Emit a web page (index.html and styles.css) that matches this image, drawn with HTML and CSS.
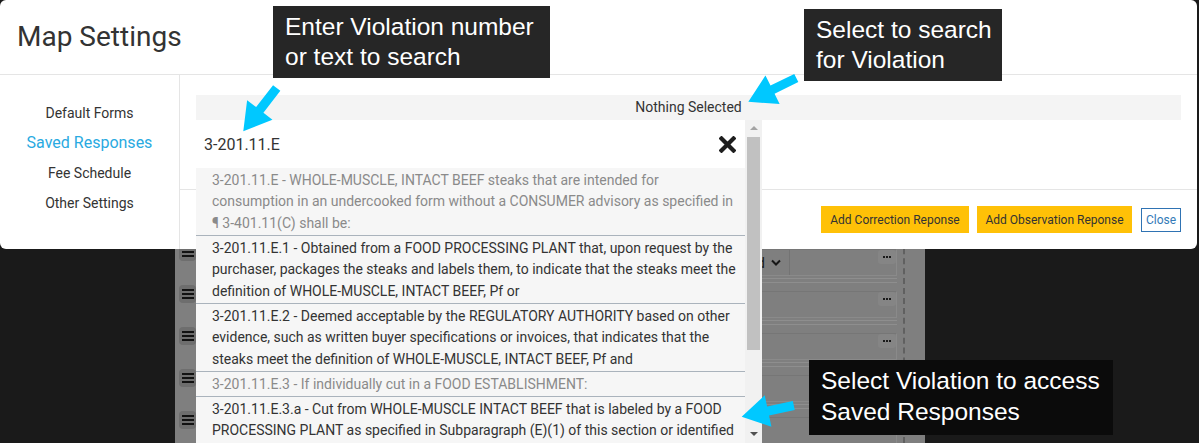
FILE: index.html
```html
<!DOCTYPE html>
<html lang="en">
<head>
<meta charset="utf-8">
<title>Map Settings</title>
<link rel="stylesheet" href="styles.css">
</head>
<body>
<div class="page">
  <div class="rows">
    <div class="row">
      <div class="handle"><i></i><i></i><i></i></div>
      <div class="cell">
        <div class="field">
          <div class="sel"><span class="sel-text">Nothing Selected</span><svg class="chev" width="10" height="7" viewBox="0 0 10 7"><path d="M1 1.5 L5 5.5 L9 1.5" fill="none" stroke="#161616" stroke-width="2"/></svg></div>
          <div class="more"><b></b><b></b><b></b></div>
        </div>
        <div class="rule"></div>
      </div>
    </div>
    <div class="row">
      <div class="handle"><i></i><i></i><i></i></div>
      <div class="cell">
        <div class="field"><div class="more"><b></b><b></b><b></b></div></div>
        <div class="rule"></div>
      </div>
    </div>
    <div class="row">
      <div class="handle"><i></i><i></i><i></i></div>
      <div class="cell">
        <div class="field"><div class="more"><b></b><b></b><b></b></div></div>
        <div class="rule"></div>
      </div>
    </div>
    <div class="row">
      <div class="handle"><i></i><i></i><i></i></div>
      <div class="cell">
        <div class="field"><div class="more"><b></b><b></b><b></b></div></div>
        <div class="rule"></div>
      </div>
    </div>
    <div class="row">
      <div class="handle"><i></i><i></i><i></i></div>
      <div class="cell">
        <div class="field"><div class="more"><b></b><b></b><b></b></div></div>
        <div class="rule"></div>
      </div>
    </div>
  </div>
  <div class="divider"></div>
</div>

<div class="modal">
  <div class="modal-header"><h1 class="modal-title">Map Settings</h1></div>
  <div class="modal-main">
    <nav class="side">
      <a class="side-link">Default Forms</a>
      <a class="side-link active">Saved Responses</a>
      <a class="side-link">Fee Schedule</a>
      <a class="side-link">Other Settings</a>
    </nav>
    <div class="content">
      <div class="content-body">
        <div class="picker">
          <div class="picker-btn">Nothing Selected</div>
          <div class="menu">
            <div class="menu-list">
              <div class="search">
                <span class="search-text">3-201.11.E</span>
                <svg class="clear" width="17" height="17" viewBox="0 0 17 17"><path d="M2.5 2.5 L14.5 14.5 M14.5 2.5 L2.5 14.5" stroke="#1e1e1e" stroke-width="4.2" stroke-linecap="square"/></svg>
              </div>
              <ul class="opts">
                <li class="opt disabled">3-201.11.E - WHOLE-MUSCLE, INTACT BEEF steaks that are intended for consumption in an undercooked form without a CONSUMER advisory as specified in ¶ 3-401.11(C) shall be:</li>
                <li class="opt">3-201.11.E.1 - Obtained from a FOOD PROCESSING PLANT that, upon request by the purchaser, packages the steaks and labels them, to indicate that the steaks meet the definition of WHOLE-MUSCLE, INTACT BEEF, Pf or</li>
                <li class="opt">3-201.11.E.2 - Deemed acceptable by the REGULATORY AUTHORITY based on other evidence, such as written buyer specifications or invoices, that indicates that the steaks meet the definition of WHOLE-MUSCLE, INTACT BEEF, Pf and</li>
                <li class="opt disabled">3-201.11.E.3 - If individually cut in a FOOD ESTABLISHMENT:</li>
                <li class="opt">3-201.11.E.3.a - Cut from WHOLE-MUSCLE INTACT BEEF that is labeled by a FOOD PROCESSING PLANT as specified in Subparagraph (E)(1) of this section or identified as specified in Subparagraph (E)(2) of this section, Pf</li>
              </ul>
            </div>
            <div class="scrollbar">
              <span class="sb-up"></span>
              <span class="sb-thumb"></span>
              <span class="sb-down"></span>
            </div>
          </div>
        </div>
      </div>
      <div class="modal-footer">
        <button class="btn btn-yellow btn-correction">Add Correction Reponse</button>
        <button class="btn btn-yellow btn-observation">Add Observation Reponse</button>
        <button class="btn btn-close">Close</button>
      </div>
    </div>
  </div>
</div>

<div class="callout c1">Enter Violation number<br>or text to search</div>
<div class="callout c2">Select to search<br>for Violation</div>
<div class="callout c3">Select Violation to access<br>Saved Responses</div>

<svg class="arrows" width="1199" height="443" viewBox="0 0 1199 443">
  <g fill="#00c8ff">
    <polygon transform="translate(276.7 88) rotate(127.65)" points="0,-4.6 27.7,-4.6 27.7,-16 54.7,0 27.7,16 27.7,4.6 0,4.6"/>
    <polygon transform="translate(796.3 78) rotate(153.7)" points="0,-4.6 26.5,-4.6 26.5,-16 53.5,0 26.5,16 26.5,4.6 0,4.6"/>
    <polygon transform="translate(793.8 405.5) rotate(167.9)" points="0,-4.6 26.3,-4.6 26.3,-16 53.3,0 26.3,16 26.3,4.6 0,4.6"/>
  </g>
</svg>
</body>
</html>
```

FILE: styles.css
```css
* { box-sizing: border-box; }

html, body {
  margin: 0;
  padding: 0;
}

body {
  width: 1199px;
  height: 443px;
  overflow: hidden;
  background: #1a1a1a;
  font-family: Roboto, "Liberation Sans", sans-serif;
  position: relative;
}

/* ---------- dimmed page behind the modal ---------- */
.page {
  margin-left: 175px;
  width: 750px;
  height: 443px;
  background: #7f7f7f;
  display: flex;
}

.rows {
  width: 728px;
  padding-top: 243px;
}

.row {
  height: 42px;
  display: flex;
  align-items: flex-start;
}

.handle {
  width: 17px;
  height: 18px;
  margin-left: 4px;
  background: #6e6e6e;
  border-radius: 4px;
  display: flex;
  flex-direction: column;
  align-items: center;
  justify-content: center;
  gap: 2px;
}

.handle i {
  display: block;
  width: 12px;
  height: 2px;
  background: #121212;
}

.cell {
  flex: 1;
  margin-left: 24px;
  margin-right: 6px;
  padding-top: 6px;
}

.field {
  height: 27px;
  border: 1px solid #8a8a8a;
  border-top-color: #767676;
  display: flex;
  align-items: flex-start;
}

.sel {
  width: 569px;
  height: 25px;
  border-right: 1px solid #737373;
  display: flex;
  align-items: center;
  justify-content: flex-end;
  gap: 6px;
  padding-right: 8px;
  font-size: 14px;
  color: #1a1a1a;
}

.sel-text {
  white-space: nowrap;
}

.more {
  margin-left: auto;
  width: 18px;
  height: 14px;
  background: #858585;
  border-radius: 3px;
  display: flex;
  align-items: center;
  justify-content: center;
  gap: 1px;
}

.more b {
  display: block;
  width: 2px;
  height: 2px;
  background: #1a1a1a;
}

.rule {
  margin-top: 2px;
  height: 5px;
  border-top: 1px solid #8e8e8e;
  border-bottom: 1px solid #8e8e8e;
}

.divider {
  width: 0;
  height: 443px;
  border-left: 2px dashed #606060;
}

/* ---------- modal ---------- */
.modal {
  position: absolute;
  top: 0;
  left: 0;
  width: 1197px;
  height: 249px;
  background: #fff;
  border-radius: 6px;
  display: flex;
  flex-direction: column;
}

.modal-header {
  height: 75px;
  border-bottom: 1px solid #e5e5e5;
  padding: 21px 0 0 17px;
}

.modal-title {
  margin: 0;
  font-weight: 400;
  font-size: 28px;
  line-height: 32px;
  color: #333;
}

.modal-main {
  flex: 1;
  display: flex;
}

.side {
  width: 180px;
  border-right: 1px solid #e5e5e5;
  padding-top: 23px;
  display: flex;
  flex-direction: column;
}

.side-link {
  display: block;
  height: 30px;
  line-height: 30px;
  text-align: center;
  font-size: 14px;
  color: #333;
}

.side-link.active {
  font-size: 16px;
  color: #29aae1;
}

.content {
  flex: 1;
  display: flex;
  flex-direction: column;
}

.content-body {
  height: 114px;
  padding: 20px 16px 0 16px;
}

.picker {
  position: relative;
}

.picker-btn {
  height: 25px;
  line-height: 25px;
  background: #f4f4f4;
  text-align: center;
  font-size: 14px;
  color: #333;
}

.menu {
  position: absolute;
  top: 25px;
  left: 0;
  width: 566px;
  height: 323px;
  background: #fff;
  display: flex;
  z-index: 5;
  overflow: hidden;
}

.menu-list {
  flex: 1;
  overflow: hidden;
}

.search {
  height: 48px;
  padding: 0 9px 0 8px;
  display: flex;
  align-items: center;
  justify-content: space-between;
  background: #fff;
}

.search-text {
  font-size: 16px;
  color: #333;
}

.clear {
  display: block;
  margin-top: 1px;
}

.opts {
  list-style: none;
  margin: 0;
  padding: 0;
  background: #f6f6f6;
}

.opt {
  padding: 1.5px 3px 1px 16px;
  font-size: 14px;
  line-height: 21.5px;
  color: #333;
  border-bottom: 1px solid #aab3bc;
}

.opt.disabled {
  color: #8a8a8a;
}

.scrollbar {
  width: 17px;
  background: #f1f1f1;
  position: relative;
  display: flex;
  flex-direction: column;
  align-items: center;
}

.sb-up {
  margin-top: 6px;
  width: 0;
  height: 0;
  border-left: 4px solid transparent;
  border-right: 4px solid transparent;
  border-bottom: 4px solid #a3a3a3;
}

.sb-thumb {
  margin-top: 7px;
  width: 13px;
  height: 213px;
  background: #c1c1c1;
}

.sb-down {
  margin-top: auto;
  margin-bottom: 7px;
  width: 0;
  height: 0;
  border-left: 4px solid transparent;
  border-right: 4px solid transparent;
  border-top: 4px solid #505050;
}

.modal-footer {
  flex: 1;
  border-top: 1px solid #e5e5e5;
  padding: 0 16px;
  display: flex;
  align-items: center;
  justify-content: flex-end;
  gap: 8px;
}

.btn {
  font-family: Roboto, "Liberation Sans", sans-serif;
  font-size: 12px;
  margin: 0;
  padding: 0;
  text-align: center;
  cursor: pointer;
}

.btn-yellow {
  height: 27px;
  border: none;
  background: #ffc107;
  color: #333;
}

.btn-correction { width: 148px; }
.btn-observation { width: 155px; }

.btn-close {
  margin-left: 1px;
  width: 40px;
  height: 24px;
  border: 1px solid #2f73b3;
  background: #fff;
  color: #337ab7;
}

/* ---------- annotation overlays ---------- */
.callout {
  position: absolute;
  z-index: 10;
  font-family: "Liberation Sans", Arial, sans-serif;
  font-size: 24.5px;
  line-height: 30px;
  color: #fff;
  background: #262626;
  padding: 6px 0 6px 12px;
  white-space: nowrap;
}

.c1 { left: 273px; top: 6px; width: 277px; height: 72px; }
.c2 { left: 804px; top: 9px; width: 198px; height: 72px; }
.c3 {
  left: 809px;
  top: 360px;
  width: 304px;
  height: 75px;
  line-height: 31px;
  padding-top: 5px;
  background: #0b0b0b;
}

.arrows {
  position: absolute;
  top: 0;
  left: 0;
  z-index: 11;
  pointer-events: none;
}
```
